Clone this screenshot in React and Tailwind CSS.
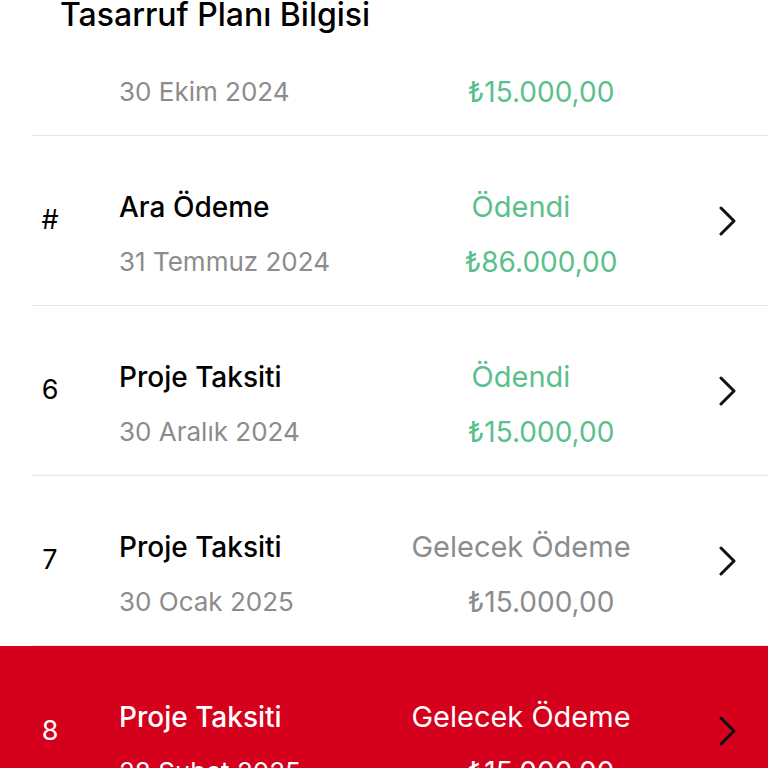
import React from 'react';

const rows = [
  { no: '', title: 'Ara Ödeme', date: '30 Ekim 2024', status: '', amount: '₺15.000,00', paid: true },
  { no: '#', title: 'Ara Ödeme', date: '31 Temmuz 2024', status: 'Ödendi', amount: '₺86.000,00', paid: true },
  { no: '6', title: 'Proje Taksiti', date: '30 Aralık 2024', status: 'Ödendi', amount: '₺15.000,00', paid: true },
  { no: '7', title: 'Proje Taksiti', date: '30 Ocak 2025', status: 'Gelecek Ödeme', amount: '₺15.000,00', paid: false },
  { no: '8', title: 'Proje Taksiti', date: '28 Şubat 2025', status: 'Gelecek Ödeme', amount: '₺15.000,00', paid: false, active: true },
];

const Chevron = () => (
  <svg width="18" height="30" viewBox="0 0 18 30" fill="none">
    <path d="M2 2 L15 15 L2 28" stroke="#111" strokeWidth="3" strokeLinecap="round" strokeLinejoin="round" />
  </svg>
);

const Row = ({ row }) => {
  const dark = row.active;
  const tone = dark ? 'text-white' : row.paid ? 'text-[#5bbf8c]' : 'text-[#8c8c8c]';
  return (
    <div className={dark ? 'bg-[#d5001c]' : ''}>
      <div className={`ml-8 h-[170px] flex items-center ${dark ? '' : 'border-b border-[#e6e6e6]'}`}>
        <div className={`w-9 text-center text-[27px] ${dark ? 'text-white' : 'text-black'}`}>{row.no}</div>
        <div className="ml-[51px] w-[260px] pt-[27px] flex flex-col gap-[15px]">
          <div className={`h-10 leading-10 text-[28px] font-medium ${dark ? 'text-white' : 'text-black'}`}>{row.title}</div>
          <div className={`h-10 leading-10 text-[26px] ${dark ? 'text-white' : 'text-[#8c8c8c]'}`}>{row.date}</div>
        </div>
        <div className="ml-[2px] w-[300px] pt-[27px] flex flex-col gap-[15px] text-center">
          <div className={`h-10 leading-10 text-[29px] pr-5 ${tone}`}>{row.status}</div>
          <div className={`h-10 leading-10 text-[28px] pl-5 ${tone}`}>{row.amount}</div>
        </div>
        <div className="ml-auto mr-[31px] flex items-center">{row.no && <Chevron />}</div>
      </div>
    </div>
  );
};

export default function App() {
  return (
    <div className="relative h-[768px] overflow-hidden bg-white" style={{ fontFamily: 'Inter, "Noto Sans", sans-serif' }}>
      <div className="absolute top-0 inset-x-0 h-[60px] bg-white z-10">
        <h1 className="pl-[60px] text-[32px] leading-[30px] font-medium text-black">Tasarruf Planı Bilgisi</h1>
      </div>
      <div className="-mt-[34px]">
        {rows.map((row, i) => (
          <Row key={i} row={row} />
        ))}
      </div>
    </div>
  );
}
